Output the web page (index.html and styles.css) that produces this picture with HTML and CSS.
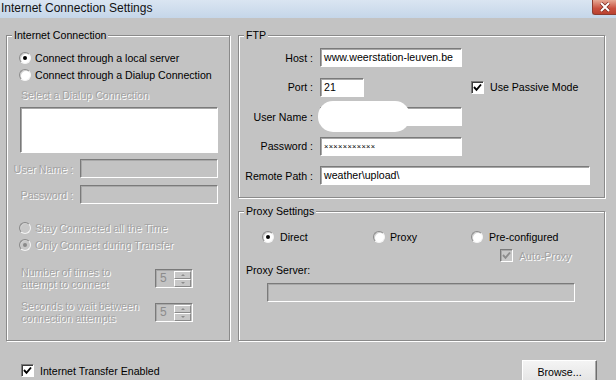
FILE: index.html
```html
<!DOCTYPE html>
<html>
<head>
    <title>Internet Connection Settings</title>
    <link rel="stylesheet" href="styles.css">
</head>
<body>
    <div class="titlebar">
        <span class="title">Internet Connection Settings</span>
        <span class="close">
            <svg width="12" height="10" viewBox="0 0 12 10">
                <path d="M2 1 L10 9 M10 1 L2 9" stroke="#7a2a20" stroke-width="3.4"/>
                <path d="M2 1 L10 9 M10 1 L2 9" stroke="#fff" stroke-width="2"/>
            </svg>
        </span>
    </div>

    <div class="main">
        <fieldset class="group conn">
            <legend>Internet Connection</legend>
            <div class="opt first"><span class="radio on"></span>Connect through a local server</div>
            <div class="opt"><span class="radio"></span>Connect through a Dialup Connection</div>
            <div class="dim dial-label">Select a Dialup Connection</div>
            <div class="listbox"></div>

            <div class="login">
                <span class="dim">User Name :</span>
                <span class="field off"></span>
                <span class="dim">Password :</span>
                <span class="field off"></span>
            </div>

            <div class="opt gap"><span class="radio off"></span><span class="dim">Stay Connected all the Time</span></div>
            <div class="opt"><span class="radio off on"></span><span class="dim">Only Connect during Transfer</span></div>

            <div class="spin-row first">
                <span class="dim spin-label">Number of times to<br>attempt to connect</span>
                <span class="spinner">
                    <span class="spin-val">5</span>
                    <span class="spin-btns"><span class="up"></span><span class="down"></span></span>
                </span>
            </div>
            <div class="spin-row">
                <span class="dim spin-label">Seconds to wait between<br>connection attempts</span>
                <span class="spinner">
                    <span class="spin-val">5</span>
                    <span class="spin-btns"><span class="up"></span><span class="down"></span></span>
                </span>
            </div>
        </fieldset>

        <div class="right">
            <fieldset class="group ftp">
                <legend>FTP</legend>
                <div class="ftp-grid">
                    <span class="lbl">Host :</span>
                    <span class="field host">www.weerstation-leuven.be</span>

                    <span class="lbl">Port :</span>
                    <span class="port-row">
                        <span class="field port">21</span>
                        <span class="check-opt passive"><span class="check"><svg width="11" height="11" viewBox="0 0 11 11"><polyline points="2,5 4.5,7.8 9,2.5" fill="none" stroke="#000" stroke-width="1.9"/></svg></span>Use Passive Mode</span>
                    </span>

                    <span class="lbl">User Name :</span>
                    <span class="user-wrap">
                        <span class="field host"></span>
                        <span class="blot"></span>
                    </span>

                    <span class="lbl">Password :</span>
                    <span class="field host pass">×××××××××××</span>

                    <span class="lbl">Remote Path :</span>
                    <span class="field remote">weather\upload\</span>
                </div>
            </fieldset>

            <fieldset class="group proxy">
                <legend>Proxy Settings</legend>
                <div class="proxy-opts">
                    <span class="popt direct"><span class="radio on"></span>Direct</span>
                    <span class="popt manual"><span class="radio"></span>Proxy</span>
                    <span class="popt"><span class="radio"></span>Pre-configured</span>
                </div>
                <div class="check-opt auto">
                    <span class="check off"><svg width="11" height="11" viewBox="0 0 11 11"><polyline points="2,5 4.5,7.8 9,2.5" fill="none" stroke="#8c8c8c" stroke-width="1.9"/></svg></span>
                    <span class="dim">Auto-Proxy</span>
                </div>
                <div class="proxy-label">Proxy Server:</div>
                <div class="field off proxy-field"></div>
            </fieldset>
        </div>
    </div>

    <div class="footer">
        <span class="check-opt enabled"><span class="check"><svg width="11" height="11" viewBox="0 0 11 11"><polyline points="2,5 4.5,7.8 9,2.5" fill="none" stroke="#000" stroke-width="1.9"/></svg></span>Internet Transfer Enabled</span>
        <button class="browse">Browse...</button>
    </div>
</body>
</html>
```

FILE: styles.css
```css
body {
    margin: 0;
    width: 616px;
    height: 380px;
    overflow: hidden;
    background-color: #c3c3c3;
    font-family: "Liberation Sans", Arial, sans-serif;
    font-size: 10.6px;
    color: #000;
}
.titlebar {
    height: 18px;
    display: flex;
    justify-content: space-between;
    align-items: flex-start;
    background: linear-gradient(#dae5f2, #c5d6e9);
}
.title {
    font-size: 12px;
    line-height: 17px;
    padding-left: 1px;
    color: #111;
}
.close {
    width: 24px;
    height: 15px;
    display: flex;
    justify-content: center;
    align-items: center;
    box-sizing: border-box;
    border: 1px solid #8c3b2f;
    border-top: none;
    border-right: none;
    border-radius: 0 0 0 3px;
    background: linear-gradient(#e6a995, #c9503f 60%, #b9412f);
}
.main {
    display: flex;
    gap: 8px;
    padding: 10px 0 0 6px;
}
.group {
    margin: 0;
    padding: 0;
    min-width: 0;
    box-sizing: border-box;
    border: 1px solid #8a8a8a;
    box-shadow: 1px 1px 0 #fff, inset 1px 1px 0 #fff;
}
.group legend {
    margin-left: 5px;
    padding: 0 2px;
    line-height: 14px;
    background-color: #c3c3c3;
}
.conn {
    width: 224px;
    height: 313px;
    padding-top: 7px;
}
.right {
    display: flex;
    flex-direction: column;
    gap: 6px;
}
.ftp {
    width: 367px;
    height: 170px;
}
.proxy {
    width: 367px;
    height: 137px;
}
.dim {
    color: #a2a2a2;
    text-shadow: 1px 1px 0 #fff;
}

/* radios and checkboxes */
.radio {
    width: 12px;
    height: 12px;
    box-sizing: border-box;
    flex-shrink: 0;
    border-radius: 50%;
    border: 1px solid;
    border-color: #8a8a8a #f4f4f4 #f4f4f4 #8a8a8a;
    background: #fff;
    box-shadow: inset 1px 1px 0 #d0d0d0;
    position: relative;
}
.radio.on::after {
    content: "";
    position: absolute;
    left: 3px;
    top: 3px;
    width: 4px;
    height: 4px;
    border-radius: 50%;
    background: #000;
}
.radio.off {
    background: #c8c8c8;
}
.radio.off.on::after {
    background: #8a8a8a;
}
.check {
    width: 13px;
    height: 13px;
    box-sizing: border-box;
    flex-shrink: 0;
    display: flex;
    align-items: center;
    justify-content: center;
    border: 1px solid;
    border-color: #7a7a7a #fff #fff #7a7a7a;
    box-shadow: inset 1px 1px 0 #3c3c3c;
    background: #fff;
}
.check.off {
    background: #c8c8c8;
    box-shadow: inset 1px 1px 0 #a8a8a8;
}
.check-opt {
    display: flex;
    align-items: center;
    gap: 6px;
}

/* left group */
.opt {
    display: flex;
    align-items: center;
    gap: 4px;
    height: 17px;
    margin-left: 12px;
}
.dial-label {
    margin: 5px 0 0 14px;
    line-height: 14px;
}
.listbox {
    width: 198px;
    height: 46px;
    margin: 5px 0 0 13px;
    box-sizing: border-box;
    background: #fff;
    border: 1px solid;
    border-color: #7a7a7a #fff #fff #7a7a7a;
    box-shadow: inset 1px 1px 0 #a8a8a8;
}
.login {
    display: grid;
    grid-template-columns: 66px 138px;
    column-gap: 7px;
    row-gap: 7px;
    align-items: center;
    margin-top: 6px;
    text-align: right;
}
.field {
    display: block;
    height: 19px;
    box-sizing: border-box;
    padding: 0 3px;
    line-height: 17px;
    white-space: nowrap;
    overflow: hidden;
    text-align: left;
    background: #fff;
    border: 1px solid;
    border-color: #7a7a7a #fff #fff #7a7a7a;
    box-shadow: inset 1px 1px 0 #a8a8a8;
}
.field.off {
    background: #c3c3c3;
}
.opt.gap {
    margin-top: 15px;
}
.spin-row {
    display: flex;
    align-items: center;
    height: 24px;
    margin: 10px 0 0 14px;
}
.spin-row.first {
    margin-top: 13px;
}
.spin-label {
    width: 134px;
    line-height: 12px;
}
.spinner {
    width: 38px;
    height: 19px;
    box-sizing: border-box;
    display: flex;
    justify-content: space-between;
    border: 1px solid;
    border-color: #7a7a7a #fff #fff #7a7a7a;
    box-shadow: inset 1px 1px 0 #a8a8a8;
}
.spin-val {
    padding: 1px 0 0 4px;
    font-size: 12px;
    color: #8c8c8c;
}
.spin-btns {
    width: 17px;
    display: flex;
    flex-direction: column;
    padding: 1px 1px 0 0;
}
.spin-btns span {
    flex: 1;
    display: flex;
    justify-content: center;
    align-items: center;
    border: 1px solid;
    border-color: #fff #8a8a8a #8a8a8a #fff;
    background: #c8c8c8;
}
.spin-btns .up::after {
    content: "";
    border: 2px solid transparent;
    border-bottom: 2px solid #8c8c8c;
    border-top: none;
}
.spin-btns .down::after {
    content: "";
    border: 2px solid transparent;
    border-top: 2px solid #8c8c8c;
    border-bottom: none;
}

/* ftp group */
.ftp-grid {
    display: grid;
    grid-template-columns: 74px auto;
    column-gap: 7px;
    row-gap: 10.5px;
    align-items: center;
    justify-items: start;
    padding-top: 6px;
}
.lbl {
    justify-self: end;
    white-space: nowrap;
}
.host {
    width: 142px;
}
.port-row {
    display: flex;
    align-items: center;
}
.port {
    width: 44px;
}
.passive {
    margin-left: 107px;
}
.user-wrap {
    position: relative;
}
.blot {
    position: absolute;
    left: -2px;
    top: -6px;
    width: 92px;
    height: 31px;
    border-radius: 15px;
    background: #fff;
}
.pass {
    font-size: 7.5px;
    letter-spacing: 0.3px;
}
.remote {
    width: 270px;
}

/* proxy group */
.proxy-opts {
    display: flex;
    align-items: center;
    height: 17px;
    margin: 10px 0 0 23px;
}
.popt {
    display: flex;
    align-items: center;
    gap: 6px;
}
.popt.direct {
    width: 111px;
}
.popt.manual {
    width: 98px;
    gap: 5px;
}
.auto {
    margin: 4px 0 0 261px;
    gap: 6px;
    height: 13px;
}
.proxy-label {
    margin: 1px 0 0 7px;
    line-height: 14px;
}
.proxy-field {
    width: 308px;
    margin: 6px 0 0 28px;
}

/* footer */
.footer {
    display: flex;
    justify-content: space-between;
    align-items: flex-start;
    padding: 0 19px 0 21px;
    margin-top: 19px;
}
.enabled {
    margin-top: 4px;
}
.browse {
    width: 75px;
    height: 23px;
    padding: 0;
    font-family: "Liberation Sans", Arial, sans-serif;
    font-size: 10.6px;
    color: #000;
    background: linear-gradient(#f4f4f4, #e4e4e4);
    border: 1px solid;
    border-color: #fff #6e6e6e #6e6e6e #fff;
    box-shadow: inset -1px -1px 0 #a8a8a8;
}
```
